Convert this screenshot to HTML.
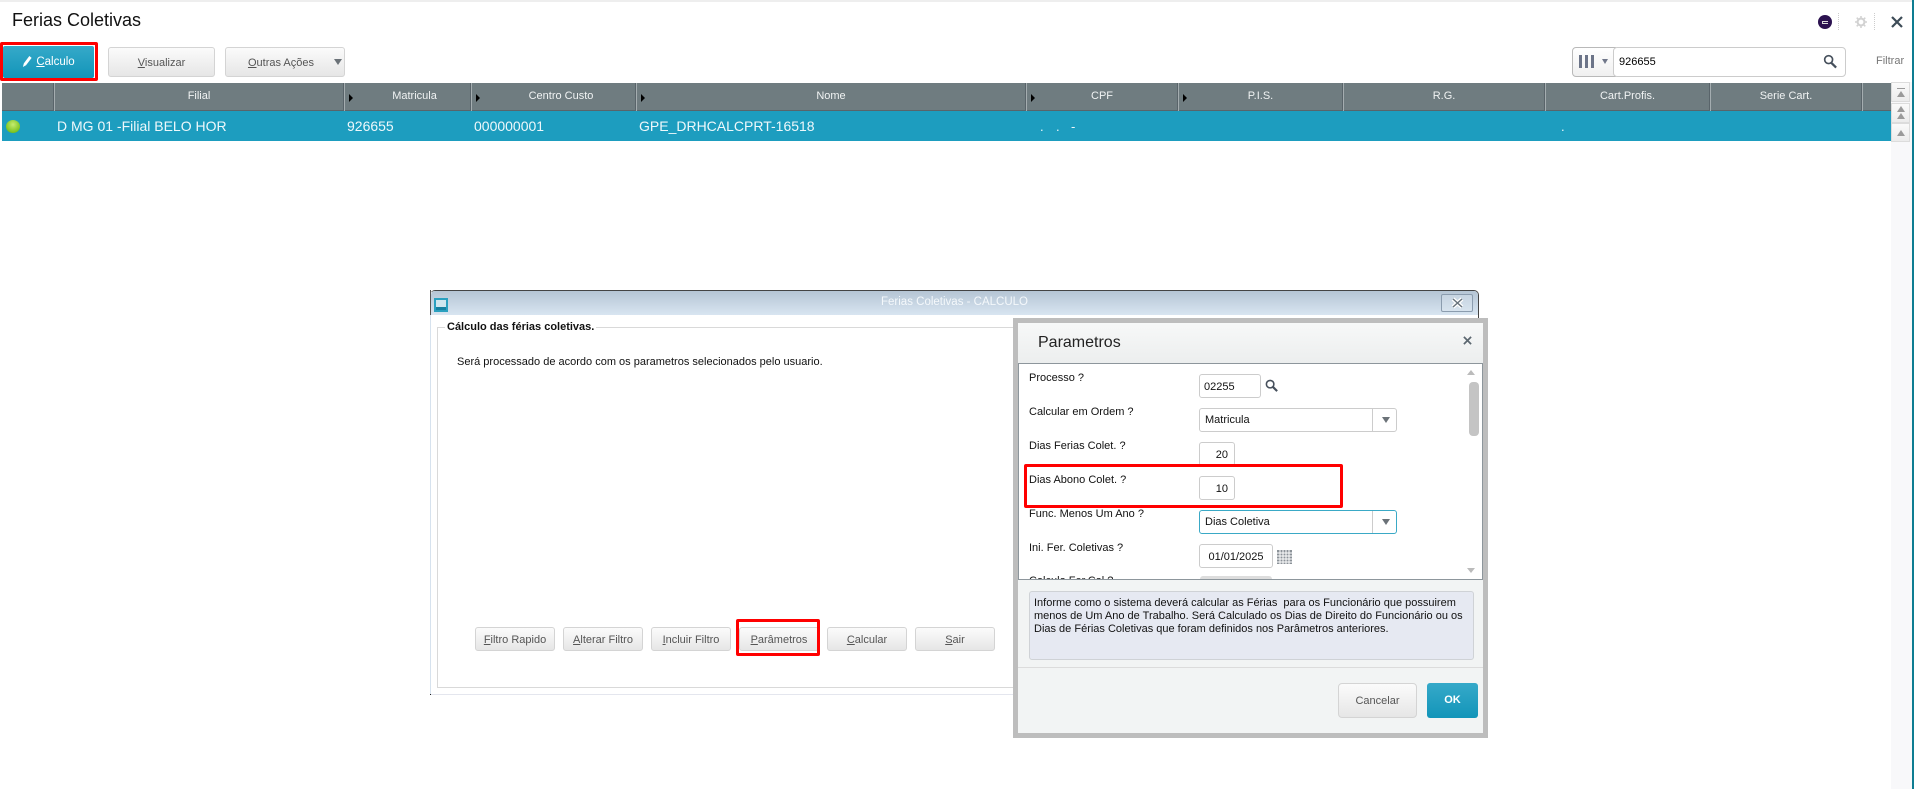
<!DOCTYPE html>
<html lang="pt"><head><meta charset="utf-8"><title>Ferias Coletivas</title>
<style>
html,body{margin:0;padding:0;background:#fff;width:1914px;height:789px;overflow:hidden}
body{position:relative;font-family:"Liberation Sans",Arial,sans-serif;font-size:11px;color:#111}
.a,.a *{box-sizing:border-box}
.a{position:absolute;white-space:nowrap}
.btn{border:1px solid #d4d4d4;border-radius:3px;background:linear-gradient(#fbfbfb,#e6e6e6);color:#555;text-align:center;display:flex;align-items:center;justify-content:center;font-size:11px;padding-top:1px}
.th{top:83px;height:27px;color:#f0f3f3;font-size:11px;line-height:27px;text-align:center}
.sep{top:83px;width:2px;height:28px;background:#59646a;border-right:1px solid #a4adb0}
.tri{top:94px;width:0;height:0;border-left:4px solid #000;border-top:4px solid transparent;border-bottom:4px solid transparent}
.td{top:111px;height:30px;line-height:31px;color:#eef8fb;font-size:14px}
.sb{left:1891px;width:19px;background:linear-gradient(#fafafa,#ececec);border:1px solid #dcdcdc}
.up{position:absolute;left:5px;width:0;height:0;border-left:4px solid transparent;border-right:4px solid transparent;border-bottom:6px solid #9a9a9a}
.lb{left:1029px;font-size:11px;color:#111;line-height:15px}
.in{left:1199px;height:24px;background:#fff;border:1px solid #ccc;border-radius:3px;font-size:11px;line-height:24px;color:#111}
.sel{left:1199px;width:198px;height:24px;background:#fff;border:1px solid #ccc;border-radius:3px;font-size:11px;line-height:23px;padding-left:5px}
.sel i{position:absolute;right:23px;top:0;bottom:0;width:1px;background:#ccc}
.sel b{position:absolute;right:6px;top:8px;width:0;height:0;border-left:4.5px solid transparent;border-right:4.5px solid transparent;border-top:6px solid #6b7278}
u{text-decoration:underline}
.red{border:3px solid #f00;border-radius:2px;background:transparent}
</style></head><body>
<div class="a" style="left:0;top:0;width:1914px;height:2px;background:#eee"></div>
<div class="a" style="left:1912px;top:0;width:2px;height:789px;background:#0e7d92"></div>
<div class="a" style="left:12px;top:10px;font-size:18px;line-height:21px;color:#111">Ferias Coletivas</div>

<!-- top right icons -->
<div class="a" style="left:1818px;top:15px;width:14px;height:14px;border-radius:50%;background:#2c1250"></div>
<div class="a" style="left:1822px;top:21px;width:6px;height:3px;border:1px solid #ddd;border-right:0"></div>
<div class="a" style="left:1838px;top:13px;height:17px;border-left:1px dotted #ccc"></div>
<svg class="a" style="left:1855px;top:16px" width="12" height="12" viewBox="0 0 14 14"><circle cx="7" cy="7" r="4" fill="none" stroke="#d2d2d2" stroke-width="2.4"/><path d="M7 0v3M7 11v3M0 7h3M11 7h3M2 2l2 2M10 10l2 2M12 2l-2 2M4 10l-2 2" stroke="#d2d2d2" stroke-width="1.8"/></svg>
<div class="a" style="left:1874px;top:13px;height:17px;border-left:1px dotted #ccc"></div>
<svg class="a" style="left:1891px;top:16px" width="12" height="12" viewBox="0 0 12 12"><path d="M1 1l10 10M11 1L1 11" stroke="#3d4b57" stroke-width="2.2"/></svg>

<!-- toolbar -->
<div class="a" style="left:3px;top:46px;width:91px;height:32px;background:linear-gradient(#36a9c9,#1295b9);border-radius:2px;color:#fff;font-size:11.5px;line-height:32px;text-align:center;padding-left:14px"><u>C</u>alculo</div>
<svg class="a" style="left:22px;top:55px" width="11" height="13" viewBox="0 0 12 14"><path d="M1 13l1-4 6-8 2.500 2-6 8z" fill="#fff"/></svg>
<div class="a red" style="left:0;top:42px;width:98px;height:39px"></div>
<div class="a btn" style="left:108px;top:47px;width:107px;height:30px"><span><u>V</u>isualizar</span></div>
<div class="a btn" style="left:225px;top:47px;width:120px;height:30px;padding-right:8px"><span><u>O</u>utras Ações</span></div>
<div class="a" style="left:334px;top:59px;width:0;height:0;border-left:4px solid transparent;border-right:4px solid transparent;border-top:6px solid #6b7278"></div>

<!-- filter -->
<div class="a" style="left:1572px;top:47px;width:44px;height:30px;border:1px solid #b9b9b9;border-radius:4px 0 0 4px;background:linear-gradient(#fff,#f0f0f0)"></div>
<div class="a" style="left:1579px;top:55px;width:3px;height:13px;background:#6c7488"></div>
<div class="a" style="left:1585px;top:55px;width:3px;height:13px;background:#6c7488"></div>
<div class="a" style="left:1591px;top:55px;width:3px;height:13px;background:#6c7488"></div>
<div class="a" style="left:1602px;top:59px;width:0;height:0;border-left:3.500px solid transparent;border-right:3.500px solid transparent;border-top:5px solid #70778a"></div>
<div class="a" style="left:1613px;top:47px;width:233px;height:30px;border:1px solid #ccc;border-radius:4px;background:#fff;font-size:11px;line-height:29px;padding-left:5px;color:#000">926655</div>
<svg class="a" style="left:1823px;top:54px" width="15" height="15" viewBox="0 0 15 16"><circle cx="5.500" cy="6" r="4.200" fill="none" stroke="#46505c" stroke-width="1.800"/><path d="M8.500 9.500L13.500 14.500" stroke="#46505c" stroke-width="2.400"/></svg>
<div class="a" style="left:1876px;top:54px;font-size:11px;line-height:15px;color:#777">Filtrar</div>

<!-- grid header -->
<div class="a" style="left:2px;top:83px;width:1889px;height:28px;background:#6f7c80;border-bottom:1px solid #59646a"></div>
<div class="a sep" style="left:53px"></div><div class="a sep" style="left:343px"></div><div class="a sep" style="left:470px"></div><div class="a sep" style="left:635px"></div><div class="a sep" style="left:1025px"></div><div class="a sep" style="left:1177px"></div><div class="a sep" style="left:1342px"></div><div class="a sep" style="left:1544px"></div><div class="a sep" style="left:1709px"></div><div class="a sep" style="left:1861px"></div>
<div class="a tri" style="left:349px"></div><div class="a tri" style="left:476px"></div><div class="a tri" style="left:641px"></div><div class="a tri" style="left:1031px"></div><div class="a tri" style="left:1183px"></div>
<div class="a th" style="left:55px;width:288px">Filial</div>
<div class="a th" style="left:345px;width:125px;padding-left:14px">Matricula</div>
<div class="a th" style="left:472px;width:163px;padding-left:15px">Centro Custo</div>
<div class="a th" style="left:637px;width:388px">Nome</div>
<div class="a th" style="left:1027px;width:150px">CPF</div>
<div class="a th" style="left:1179px;width:163px">P.I.S.</div>
<div class="a th" style="left:1344px;width:200px">R.G.</div>
<div class="a th" style="left:1546px;width:163px">Cart.Profis.</div>
<div class="a th" style="left:1711px;width:150px">Serie Cart.</div>

<!-- grid row -->
<div class="a" style="left:2px;top:111px;width:1889px;height:30px;background:#1d9dbf"></div>
<div class="a" style="left:6px;top:120px;width:14px;height:13px;border-radius:50%;background:radial-gradient(circle at 50% 35%,#c6ec70,#7cc421 70%,#5a9a19)"></div>
<div class="a td" style="left:57px">D MG 01 -Filial BELO HOR</div>
<div class="a td" style="left:347px">926655</div>
<div class="a td" style="left:474px">000000001</div>
<div class="a td" style="left:639px">GPE_DRHCALCPRT-16518</div>
<div class="a td" style="left:1040px;font-size:13px">.</div>
<div class="a td" style="left:1056px;font-size:13px">.</div>
<div class="a td" style="left:1071px;font-size:13px">-</div>
<div class="a td" style="left:1561px;font-size:13px">.</div>

<!-- grid scrollbar -->
<div class="a" style="left:1891px;top:82px;width:21px;height:707px;background:#f8f8fa"></div>
<div class="a sb" style="top:82px;height:20px"><span class="up" style="top:8px"></span><span style="position:absolute;left:5px;top:5px;width:8px;height:1px;background:#9a9a9a"></span></div>
<div class="a sb" style="top:103px;height:20px"><span class="up" style="top:2px"></span><span class="up" style="top:9px"></span></div>
<div class="a sb" style="top:123px;height:19px"><span class="up" style="top:6px"></span></div>

<!-- dialog -->
<div class="a" style="left:430px;top:290px;width:1049px;height:405px;background:#fff;border-top:1px solid #444;border-right:1px solid #444;border-radius:5px 5px 0 0"></div>
<div class="a" style="left:430px;top:290px;width:1px;height:25px;background:#555"></div>
<div class="a" style="left:431px;top:291px;width:1047px;height:24px;background:linear-gradient(#b5c5d4,#d8e5f1);border-radius:4px 4px 0 0"></div>
<div class="a" style="left:434px;top:298px;width:14px;height:14px;background:#1680a0;border:2px solid #2aa0bf"></div>
<div class="a" style="left:436px;top:300px;width:10px;height:7px;background:#cfe6ee"></div>
<div class="a" style="left:881px;top:295px;font-size:11.500px;line-height:14px;color:#f4f8fb">Ferias Coletivas - CALCULO</div>
<div class="a" style="left:1441px;top:294px;width:32px;height:18px;border:1px solid #8b9cae;border-radius:2px;background:linear-gradient(#c6d4e1,#d7e3ee)"></div>
<svg class="a" style="left:1451px;top:297px" width="13" height="12" viewBox="0 0 13 12"><path d="M2 2l9 8M11 2L2 10" stroke="#fff" stroke-width="4"/><path d="M2 2l9 8M11 2L2 10" stroke="#68737c" stroke-width="1.500"/></svg>
<div class="a" style="left:431px;top:694px;width:590px;height:1px;background:#e4e6ee"></div>
<div class="a" style="left:430px;top:315px;width:1px;height:380px;background:#d6e2ee"></div>
<div class="a" style="left:430px;top:694px;width:1px;height:1px;background:#222"></div>
<div class="a" style="left:437px;top:327px;width:590px;height:361px;border:1px solid #d9d9d9"></div>
<div class="a" style="left:445px;top:320px;background:#fff;padding:0 2px;font-size:11px;font-weight:700;line-height:15px;color:#111">Cálculo das férias coletivas.</div>
<div class="a" style="left:457px;top:355px;font-size:11px;line-height:15px;color:#111">Será processado de acordo com os parametros selecionados pelo usuario.</div>
<div class="a btn" style="left:475px;top:627px;width:80px;height:24px"><span><u>F</u>iltro Rapido</span></div>
<div class="a btn" style="left:563px;top:627px;width:80px;height:24px"><span><u>A</u>lterar Filtro</span></div>
<div class="a btn" style="left:651px;top:627px;width:80px;height:24px"><span><u>I</u>ncluir Filtro</span></div>
<div class="a btn" style="left:739px;top:627px;width:80px;height:24px"><span><u>P</u>arâmetros</span></div>
<div class="a red" style="left:736px;top:619px;width:84px;height:37px"></div>
<div class="a btn" style="left:827px;top:627px;width:80px;height:24px"><span><u>C</u>alcular</span></div>
<div class="a btn" style="left:915px;top:627px;width:80px;height:24px"><span><u>S</u>air</span></div>

<!-- parametros modal -->
<div class="a" style="left:1013px;top:318px;width:475px;height:420px;background:#f2f4f4;border:5px solid #bdbdbd"></div>
<div class="a" style="left:1018px;top:323px;width:465px;height:40px;background:linear-gradient(#f7f8f8,#eceeee)"></div>
<div class="a" style="left:1038px;top:333px;font-size:16px;line-height:20px;color:#222">Parametros</div>
<svg class="a" style="left:1463px;top:336px" width="9" height="9" viewBox="0 0 10 10"><path d="M1 1l8 8M9 1L1 9" stroke="#5c6770" stroke-width="1.900"/></svg>
<div class="a" style="left:1018px;top:363px;width:465px;height:217px;background:#fff;border:1px solid #8d969c;overflow:hidden"></div>

<div class="a lb" style="top:371px">Processo ?</div>
<div class="a in" style="top:374px;width:62px;padding-left:4px">02255</div>
<svg class="a" style="left:1265px;top:379px" width="14" height="14" viewBox="0 0 15 15"><circle cx="5.500" cy="5.500" r="4" fill="none" stroke="#46505c" stroke-width="1.700"/><path d="M8.500 8.500L13 13" stroke="#46505c" stroke-width="2.300"/></svg>
<div class="a lb" style="top:405px">Calcular em Ordem ?</div>
<div class="a sel" style="top:408px">Matricula<i></i><b></b></div>
<div class="a lb" style="top:439px">Dias Ferias Colet. ?</div>
<div class="a in" style="top:442px;width:36px;text-align:right;padding-right:6px">20</div>
<div class="a lb" style="top:473px">Dias Abono Colet. ?</div>
<div class="a in" style="top:476px;width:36px;text-align:right;padding-right:6px">10</div>
<div class="a red" style="left:1024px;top:464px;width:319px;height:44px"></div>
<div class="a lb" style="top:507px">Func. Menos Um Ano ?</div>
<div class="a sel" style="top:510px;border-color:#3aa9c6">Dias Coletiva<i></i><b></b></div>
<div class="a lb" style="top:541px">Ini. Fer. Coletivas ?</div>
<div class="a in" style="top:544px;width:74px;text-align:center">01/01/2025</div>
<svg class="a" style="left:1277px;top:550px" width="15" height="14" viewBox="0 0 15 14"><path d="M0 0h15v14H0z" fill="#8b9298"/><path d="M3 0v14M6 0v14M9 0v14M12 0v14M0 3h15M0 6h15M0 9h15M0 12h15" stroke="#fff" stroke-width="1"/></svg>
<div class="a" style="left:1019px;top:574px;width:463px;height:5px;overflow:hidden"><div style="position:absolute;left:10px;top:0;font-size:11px;line-height:14px">Calculo Fer.Col.?</div><div style="position:absolute;left:181px;top:2px;width:72px;height:10px;background:#ddd;border-radius:3px"></div></div>

<div class="a" style="left:1467px;top:370px;width:0;height:0;border-left:4px solid transparent;border-right:4px solid transparent;border-bottom:5px solid #bbb"></div>
<div class="a" style="left:1469px;top:382px;width:10px;height:54px;background:#c4c4c4;border-radius:4px"></div>
<div class="a" style="left:1467px;top:568px;width:0;height:0;border-left:4px solid transparent;border-right:4px solid transparent;border-top:5px solid #bbb"></div>

<div class="a" style="left:1029px;top:591px;width:445px;height:69px;background:#e6e9f2;border:1px solid #cfd2d6;border-radius:3px;padding:5px 4px;font-size:11px;line-height:13px;color:#111;white-space:pre">Informe como o sistema deverá calcular as Férias  para os Funcionário que possuirem
menos de Um Ano de Trabalho. Será Calculado os Dias de Direito do Funcionário ou os
Dias de Férias Coletivas que foram definidos nos Parâmetros anteriores.</div>
<div class="a" style="left:1018px;top:667px;width:465px;height:1px;background:#dcdcdc"></div>
<div class="a btn" style="left:1338px;top:683px;width:79px;height:35px;border-radius:4px"><span>Cancelar</span></div>
<div class="a" style="left:1427px;top:683px;width:51px;height:35px;background:linear-gradient(#36a9c9,#1295b9);border-radius:3px;color:#fff;font-weight:700;font-size:11px;line-height:35px;text-align:center">OK</div>
</body></html>
